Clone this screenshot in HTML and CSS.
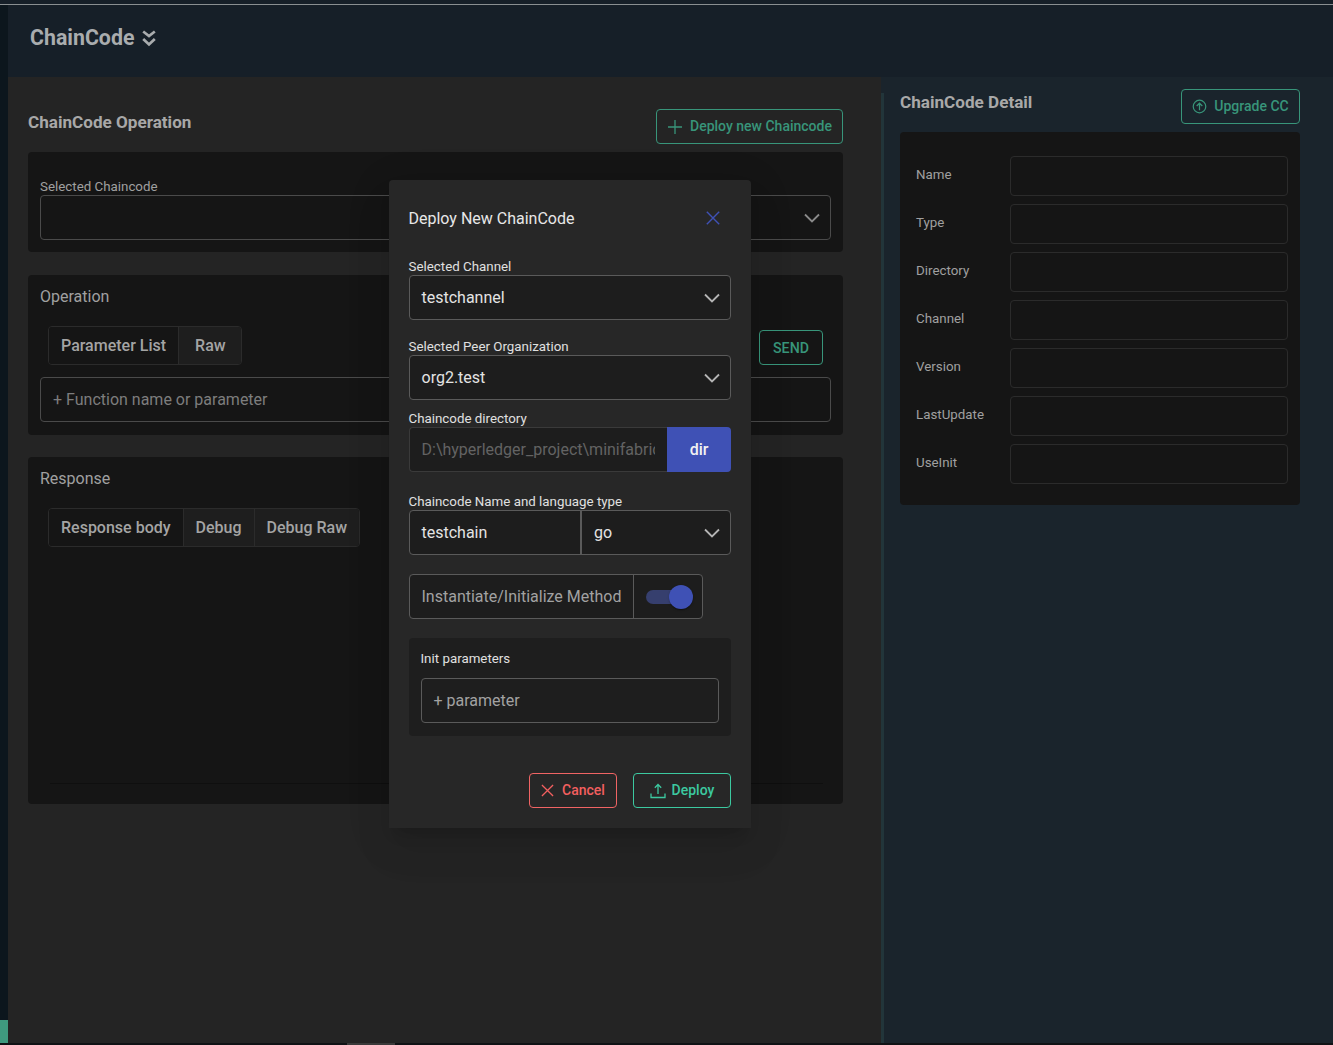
FILE: index.html
```html
<!DOCTYPE html>
<html lang="en">
<head>
<meta charset="utf-8">
<title>ChainCode</title>
<link rel="stylesheet" href="styles.css">
</head>
<body>
<div class="topbar"></div>
<div class="shell">
  <aside class="rail"><div class="rail-mark"></div></aside>
  <div class="workspace">
    <header class="page-head">
      <h1 class="page-title">ChainCode</h1>
      <svg class="dbl-chevron" viewBox="0 0 14 17" width="14" height="17"><path d="M1.200 1.500 7 6l5.800-4.500M1.200 9 7 14.500 12.800 9" fill="none" stroke="currentColor" stroke-width="2.700"/></svg>
    </header>
    <div class="columns">
      <main class="left">
        <div class="left-head">
          <h2 class="section-title">ChainCode Operation</h2>
          <button class="btn btn-page btn-deploy-new">
            <svg viewBox="0 0 16 16" width="16" height="16"><path d="M8 1v14M1 8h14" fill="none" stroke="currentColor" stroke-width="1.300"/></svg>
            <span>Deploy new Chaincode</span>
          </button>
        </div>
        <section class="card card-select">
          <div class="small-label">Selected Chaincode</div>
          <div class="field field-select">
            <svg class="chev dim" viewBox="0 0 16 10" width="16" height="10"><path d="M1 1.500 8 8.500l7-7" fill="none" stroke="currentColor" stroke-width="1.800"/></svg>
          </div>
        </section>
        <section class="card card-op">
          <div class="card-title">Operation</div>
          <div class="op-tools">
            <div class="tabs">
              <span class="tab tab-active">Parameter List</span>
              <span class="tab tab-wide">Raw</span>
            </div>
            <button class="btn btn-page btn-send">SEND</button>
          </div>
          <div class="field placeholder">+ Function name or parameter</div>
        </section>
        <section class="card card-resp">
          <div class="card-title">Response</div>
          <div class="tabs tabs-resp">
            <span class="tab tab-active">Response body</span>
            <span class="tab">Debug</span>
            <span class="tab">Debug Raw</span>
          </div>
          <div class="resp-line"></div>
        </section>
      </main>
      <div class="divider"></div>
      <aside class="right">
        <div class="right-head">
          <h2 class="section-title">ChainCode Detail</h2>
          <button class="btn btn-page btn-upgrade">
            <svg viewBox="0 0 16 16" width="15" height="15"><circle cx="8" cy="8" r="6.700" fill="none" stroke="currentColor" stroke-width="1.300"/><path d="M8 12V4.800M5 7.500l3-3 3 3" fill="none" stroke="currentColor" stroke-width="1.300"/></svg>
            <span>Upgrade CC</span>
          </button>
        </div>
        <section class="card card-detail">
          <div class="detail-row"><span class="detail-label">Name</span><div class="detail-field"></div></div>
          <div class="detail-row"><span class="detail-label">Type</span><div class="detail-field"></div></div>
          <div class="detail-row"><span class="detail-label">Directory</span><div class="detail-field"></div></div>
          <div class="detail-row"><span class="detail-label">Channel</span><div class="detail-field"></div></div>
          <div class="detail-row"><span class="detail-label">Version</span><div class="detail-field"></div></div>
          <div class="detail-row"><span class="detail-label">LastUpdate</span><div class="detail-field"></div></div>
          <div class="detail-row"><span class="detail-label">UseInit</span><div class="detail-field"></div></div>
        </section>
      </aside>
    </div>
  </div>
</div>
<div class="bottombar"><div class="scroll-thumb"></div></div>

<div class="modal">
  <div class="modal-head">
    <h3 class="modal-title">Deploy New ChainCode</h3>
    <svg class="close-x" viewBox="0 0 14 14" width="14" height="14"><path d="M.8.800 13.200 13.200M13.200.800.800 13.200" fill="none" stroke="currentColor" stroke-width="1.400"/></svg>
  </div>
  <div class="m-label m-first">Selected Channel</div>
  <div class="m-field m-select">testchannel
    <svg class="chev" viewBox="0 0 16 10" width="16" height="10"><path d="M1 1.500 8 8.500l7-7" fill="none" stroke="currentColor" stroke-width="1.800"/></svg>
  </div>
  <div class="m-label m-peer">Selected Peer Organization</div>
  <div class="m-field m-select">org2.test
    <svg class="chev" viewBox="0 0 16 10" width="16" height="10"><path d="M1 1.500 8 8.500l7-7" fill="none" stroke="currentColor" stroke-width="1.800"/></svg>
  </div>
  <div class="m-label m-dir">Chaincode directory</div>
  <div class="dir-group">
    <div class="dir-input"><span class="dir-text">D:\hyperledger_project\minifabric</span></div>
    <div class="dir-btn">dir</div>
  </div>
  <div class="m-label m-name">Chaincode Name and language type</div>
  <div class="m-field name-group">
    <div class="name-part">testchain</div>
    <div class="lang-part">go
      <svg class="chev" viewBox="0 0 16 10" width="16" height="10"><path d="M1 1.500 8 8.500l7-7" fill="none" stroke="currentColor" stroke-width="1.800"/></svg>
    </div>
  </div>
  <div class="toggle-group">
    <div class="toggle-label">Instantiate/Initialize Method</div>
    <div class="toggle-cell"><div class="switch"><div class="switch-knob"></div></div></div>
  </div>
  <div class="init-card">
    <div class="init-label">Init parameters</div>
    <div class="init-input">+ parameter</div>
  </div>
  <div class="modal-actions">
    <button class="btn btn-cancel">
      <svg viewBox="0 0 14 14" width="13" height="13"><path d="M1 1l12 12M13 1 1 13" fill="none" stroke="currentColor" stroke-width="1.400"/></svg>
      <span>Cancel</span>
    </button>
    <button class="btn btn-deploy">
      <svg viewBox="0 0 16 16" width="16" height="16"><path d="M8 11V1.800M4.800 4.800 8 1.500l3.200 3.300M1 10.500v4h14v-4" fill="none" stroke="currentColor" stroke-width="1.300"/></svg>
      <span>Deploy</span>
    </button>
  </div>
</div>
</body>
</html>
```
FILE: styles.css
```css
* { box-sizing: border-box; }
html, body { margin: 0; height: 100%; }
body {
  width: 1333px;
  height: 1045px;
  overflow: hidden;
  position: relative;
  display: flex;
  flex-direction: column;
  background: #101215;
  font-family: Roboto, "Liberation Sans", sans-serif;
  color: #a8a8a8;
}
h1, h2, h3 { margin: 0; }
button { font-family: inherit; background: none; cursor: pointer; }

.topbar { height: 5px; flex: none; background: #161f28; border-bottom: 1px solid #8a8f91; }
.shell { flex: 1; display: flex; min-height: 0; }
.rail { width: 8px; flex: none; background: #0c161d; display: flex; flex-direction: column; justify-content: flex-end; }
.rail-mark { height: 23px; background: #3f9a7f; }
.workspace { flex: 1; display: flex; flex-direction: column; min-width: 0; }
.page-head { height: 72px; flex: none; display: flex; align-items: center; gap: 8px; padding: 0 0 6px 22px; background: #161f28; }
.page-title { font-size: 21.33px; font-weight: 700; color: #a9acae; line-height: 24px; }
.dbl-chevron { color: #a9acae; }
.columns { flex: 1; display: flex; min-height: 0; background: #1a242c; }

.left { width: 873px; flex: none; background: #242424; padding: 32px 38px 0 20px; }
.left-head { height: 35px; display: flex; justify-content: space-between; margin-bottom: 8px; }
.section-title { font-size: 17.12px; font-weight: 700; color: #a8a8a8; line-height: 26px; }
.card { background: #151515; border-radius: 4px; }
.card-select { height: 100px; padding: 26px 12px 0; }
.small-label { font-size: 13.33px; line-height: 18px; color: #a0a0a0; margin-bottom: -1px; }
.field {
  height: 45px;
  border: 1px solid #4a4a4a;
  border-radius: 4px;
  display: flex;
  align-items: center;
  justify-content: space-between;
  padding: 0 10px 0 12px;
}
.chev { color: #b5b5b5; flex: none; }
.chev.dim { color: #8a8a8a; margin-left: auto; }
.card-op { height: 160px; margin-top: 23px; padding: 10px 12px 0; }
.card-title { font-size: 16px; line-height: 24px; color: #a0a0a0; }
.op-tools { display: flex; justify-content: space-between; align-items: flex-end; padding: 0 8px; height: 56px; margin-bottom: 12px; }
.tabs { display: flex; height: 39px; border: 1px solid #2b2b2b; border-radius: 4px; overflow: hidden; font-size: 16px; font-weight: 500; color: #a4a4a4; }
.tab { padding: 0 12px; line-height: 37px; background: #1e1e1e; border-left: 1px solid #2b2b2b; }
.tab:first-child { border-left: 0; }
.tab-wide { padding: 0 15px 0 16px; }
.tab-active { background: #151515; }
.placeholder { font-size: 16px; color: #7d7d7d; justify-content: flex-start; }
.card-resp { height: 347px; margin-top: 22px; padding: 10px 12px 0; position: relative; }
.tabs-resp { margin: 17px 8px 0; width: max-content; }
.resp-line { height: 1px; background: #0f0f0f; margin: 236px 8px 0 10px; }

.btn {
  height: 35px;
  display: inline-flex;
  align-items: center;
  justify-content: center;
  border-radius: 4px;
  font-size: 14px;
  font-weight: 500;
  gap: 7px;
  padding: 0;
}
.btn span { position: relative; top: -1px; }
.btn-page { border: 1px solid #38957a; color: #38957a; }
.btn-deploy-new { width: 187px; }
.btn-send { width: 64px; font-size: 14.2px; }
.btn-upgrade { width: 119px; }

.divider { width: 3px; flex: none; margin-top: 16px; background: #22353a; }
.right { flex: 1; padding: 12px 33px 0 16px; }
.right-head { height: 35px; display: flex; justify-content: space-between; margin-bottom: 8px; }
.card-detail { height: 373px; padding: 24px 12px 0 16px; display: flex; flex-direction: column; gap: 8px; }
.detail-row { display: flex; align-items: center; height: 40px; }
.detail-label { width: 94px; flex: none; font-size: 13.33px; color: #a0a0a0; font-weight: 400; padding-bottom: 3px; }
.detail-field { flex: 1; height: 40px; border: 1px solid #2b2b2b; border-radius: 4px; }

.bottombar { height: 2px; flex: none; background: #101215; padding-left: 347px; }
.scroll-thumb { width: 48px; height: 2px; background: #3a3a3a; }

.modal {
  position: absolute;
  left: 389px;
  top: 180px;
  width: 362px;
  height: 648px;
  padding: 26px 20px 20px;
  background: #272727;
  border-radius: 4px 4px 0 0;
  box-shadow: 0 11px 15px -7px rgba(0,0,0,.16), 0 24px 38px 3px rgba(0,0,0,.06), 0 9px 46px 8px rgba(0,0,0,.05);
  color: #e4e4e4;
}
.modal-head { height: 24px; display: flex; align-items: center; justify-content: space-between; padding-right: 11px; }
.modal-title { font-size: 16px; font-weight: 400; line-height: 24px; padding-top: 2px; margin-left: -.5px; color: #e8e8e8; }
.close-x { color: #3f51b5; }
.m-label { font-size: 13.33px; font-weight: 400; line-height: 18px; margin-bottom: -1px; margin-left: -.5px; color: #e0e0e0; }
.m-first { margin-top: 28px; }
.m-peer { margin-top: 18px; }
.m-dir { margin-top: 10px; }
.m-name { margin-top: 21px; }
.m-field {
  height: 45px;
  border: 1px solid #5a5a5a;
  border-radius: 4px;
  background: #1d1d1d;
  font-size: 16px;
  color: #e4e4e4;
}
.m-select { display: flex; align-items: center; justify-content: space-between; padding: 0 10px 0 11.5px; }
.dir-group { display: flex; height: 45px; }
.dir-input {
  width: 258px;
  border: 1px solid #3a3a3a;
  border-right: 0;
  border-radius: 4px 0 0 4px;
  background: #1d1d1d;
  padding: 0 12px 0 11.5px;
  font-size: 16px;
  color: #636363;
  display: flex;
  align-items: center;
  overflow: hidden;
}
.dir-text { white-space: nowrap; overflow: hidden; }
.dir-btn {
  flex: 1;
  background: #3f51b5;
  border-radius: 0 4px 4px 0;
  color: #f2f2f2;
  font-size: 16px;
  font-weight: 500;
  display: flex;
  align-items: center;
  justify-content: center;
}
.name-group { display: flex; }
.name-part { width: 172px; padding: 0 11.5px; display: flex; align-items: center; border-right: 2px solid #5a5a5a; }
.lang-part { flex: 1; padding: 0 10px 0 12px; display: flex; align-items: center; justify-content: space-between; }
.toggle-group {
  margin-top: 19px;
  width: 294px;
  height: 45px;
  display: flex;
  border: 1px solid #5a5a5a;
  border-radius: 4px;
  background: #1d1d1d;
}
.toggle-label { width: 224px; padding-left: 11.5px; font-size: 16px; color: #a2a2a2; display: flex; align-items: center; border-right: 1px solid #5a5a5a; white-space: nowrap; }
.toggle-cell { flex: 1; display: flex; align-items: center; padding-left: 12px; }
.switch { width: 34px; height: 14px; border-radius: 7px; background: #363f6e; position: relative; }
.switch-knob {
  position: absolute;
  right: -13px;
  top: -5px;
  width: 24px;
  height: 24px;
  border-radius: 50%;
  background: #3f51b5;
  box-shadow: 0 2px 1px -1px rgba(0,0,0,.2), 0 1px 1px rgba(0,0,0,.14), 0 1px 3px rgba(0,0,0,.12);
}
.init-card { margin-top: 19px; height: 98px; background: #1e1e1e; border-radius: 4px; padding: 12px 12px 0; }
.init-label { font-size: 13.33px; font-weight: 400; line-height: 18px; color: #e0e0e0; margin-bottom: 10px; margin-left: -.5px; }
.init-input { height: 45px; border: 1px solid #5a5a5a; border-radius: 4px; padding: 0 12px 0 11.5px; display: flex; align-items: center; font-size: 16px; color: #a2a2a2; }
.modal-actions { margin-top: 37px; display: flex; justify-content: flex-end; gap: 16px; }
.btn-cancel { width: 88px; gap: 8px; border: 1px solid #f06464; color: #f25f5f; }
.btn-deploy { width: 98px; gap: 6px; border: 1px solid #3cc9a0; color: #3cc9a0; }
```
